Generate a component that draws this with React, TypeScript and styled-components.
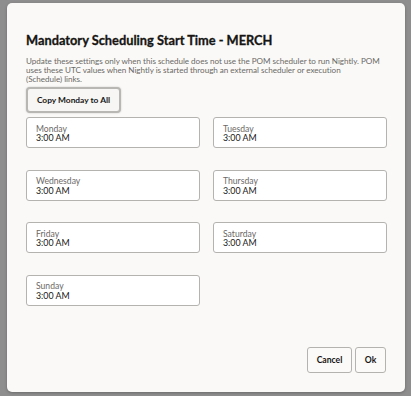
import styled, { createGlobalStyle } from 'styled-components';

const GlobalStyle = createGlobalStyle`
	html, body {
		margin: 0;
		padding: 0;
		background: #8e8e8e;
		font-family: Lato, "Noto Sans", sans-serif;
	}
`;

const Backdrop = styled.div`
	width: 411px;
	height: 396px;
	padding: 3px 6px 0 7px;
	box-sizing: border-box;
`;

const Dialog = styled.div`
	width: 398px;
	height: 389px;
	box-sizing: border-box;
	background: #faf9f7;
	border-radius: 5px;
	box-shadow: 0 1px 3px rgba(0, 0, 0, 0.25);
	padding: 28px 17px 19px 19px;
	display: flex;
	flex-direction: column;
`;

const Title = styled.h1`
	margin: 0;
	font-size: 12.8px;
	font-weight: 700;
	line-height: 18px;
	color: #161513;
	-webkit-text-stroke: 0.3px #161513;
`;

const Description = styled.p`
	margin: 8px 0 0 0;
	font-size: 8.1px;
	letter-spacing: -0.03px;
	line-height: 9px;
	color: #6b6966;
	white-space: nowrap;
`;

const CopyButton = styled.button`
	align-self: flex-start;
	margin-top: 3px;
	width: 95px;
	height: 26px;
	box-sizing: border-box;
	border: 2px solid #b9b7b4;
	border-radius: 4px;
	background: #f7f6f4;
	box-shadow: 0 0 2px rgba(0, 0, 0, 0.2);
	font-family: inherit;
	font-size: 8.4px;
	font-weight: 700;
	color: #161513;
	padding: 0;
`;

const DayGrid = styled.div`
	margin-top: 4px;
	display: grid;
	grid-template-columns: 174px 174px;
	column-gap: 13px;
	row-gap: 21.5px;
`;

const Field = styled.div`
	height: 31px;
	box-sizing: border-box;
	border: 1px solid #b5b3b0;
	border-radius: 3px;
	background: #ffffff;
	padding: 6.5px 9px 0 9px;
	display: flex;
	flex-direction: column;
`;

const FieldLabel = styled.span`
	font-size: 8.6px;
	line-height: 8.5px;
	color: #6b6966;
`;

const FieldValue = styled.span`
	font-size: 8.8px;
	line-height: 9px;
	color: #161513;
`;

const Footer = styled.div`
	margin-top: auto;
	display: flex;
	justify-content: flex-end;
	gap: 3px;
	padding-right: 2px;
`;

const FooterButton = styled.button<{ $width: number }>`
	width: ${(p) => p.$width}px;
	height: 26px;
	box-sizing: border-box;
	border: 1px solid #b5b3b0;
	border-radius: 3px;
	background: #fbfaf9;
	font-family: inherit;
	font-size: 8.6px;
	font-weight: 700;
	color: #161513;
	padding: 0;
`;

const days = ['Monday', 'Tuesday', 'Wednesday', 'Thursday', 'Friday', 'Saturday', 'Sunday'];

export default function App() {
	return (
		<>
			<GlobalStyle />
			<Backdrop>
				<Dialog>
					<Title>Mandatory Scheduling Start Time - MERCH</Title>
					<Description>
						Update these settings only when this schedule does not use the POM scheduler to run Nightly. POM
						<br />
						uses these UTC values when Nightly is started through an external scheduler or execution
						<br />
						(Schedule) links.
					</Description>
					<CopyButton>Copy Monday to All</CopyButton>
					<DayGrid>
						{days.map((day) => (
							<Field key={day}>
								<FieldLabel>{day}</FieldLabel>
								<FieldValue>3:00 AM</FieldValue>
							</Field>
						))}
					</DayGrid>
					<Footer>
						<FooterButton $width={45}>Cancel</FooterButton>
						<FooterButton $width={31}>Ok</FooterButton>
					</Footer>
				</Dialog>
			</Backdrop>
		</>
	);
}
